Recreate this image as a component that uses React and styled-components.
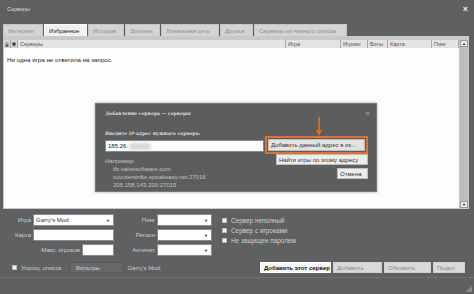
import React from "react";
import styled, { createGlobalStyle } from "styled-components";

const GlobalStyle = createGlobalStyle`
  html, body {
    margin: 0;
    padding: 0;
    background: #5d5f60;
  }
  * {
    box-sizing: border-box;
  }
`;

const Window = styled.div`
  position: relative;
  width: 474px;
  height: 294px;
  overflow: hidden;
  background: #5e6061;
  font-family: "Liberation Sans", Arial, sans-serif;
  font-size: 6px;
  color: #cfcfcf;
  display: flex;
  flex-direction: column;
`;

const TitleBar = styled.div`
  height: 24px;
  display: flex;
  align-items: flex-start;
  justify-content: space-between;
  padding: 6px 6px 0 7px;
  color: #d8d8d8;
  font-size: 5.5px;
`;

const Close = styled.span`
  font-size: 9px;
  font-weight: bold;
  color: #eee;
  line-height: 6px;
`;

const Tabs = styled.div`
  display: flex;
  gap: 1px;
  height: 12px;
  padding-left: 3px;
`;

const Tab = styled.div`
  width: ${(p) => p.w}px;
  height: 12px;
  padding: 0 0 0 4px;
  display: flex;
  align-items: center;
  background: ${(p) => (p.active ? "#f1f1f1" : "#d4d4d4")};
  color: ${(p) => (p.active ? "#1e1e1e" : "#8c8c8c")};
  border: 1px solid ${(p) => (p.active ? "#fafafa" : "#c4c4c4")};
  border-bottom: none;
  white-space: nowrap;
`;

const Panel = styled.div`
  height: 173px;
  margin: 0 5px 0 3px;
  background: #c9c9c9;
  padding: 4px 1px 1px 1px;
  display: flex;
`;

const ListArea = styled.div`
  flex: 1;
  display: flex;
  flex-direction: column;
`;

const Header = styled.div`
  height: 8px;
  display: flex;
  background: #e3e3e3;
  color: #555;
  font-size: 5.5px;
`;

const HeaderCell = styled.div`
  width: ${(p) => (p.w ? `${p.w}px` : "auto")};
  flex: ${(p) => (p.w ? "none" : 1)};
  display: flex;
  align-items: center;
  padding-left: 2px;
  border-right: 1px solid #a8a8a8;
  white-space: nowrap;
`;

const IconCell = styled.div`
  width: 7px;
  display: flex;
  align-items: center;
  justify-content: center;
  border-right: 1px solid #a8a8a8;
  background: #d6d6d6;
`;

const List = styled.div`
  flex: 1;
  background: #fdfdfd;
  color: #1c1c1c;
  padding: 8px 0 0 3px;
  font-size: 6.2px;
`;

const ScrollBar = styled.div`
  width: 8px;
  background: #bdbdbd;
  display: flex;
  flex-direction: column;
  justify-content: space-between;
  margin-left: 1px;
`;

const ScrollBtn = styled.div`
  height: 7px;
  background: #e8e8e8;
  border: 1px solid #9a9a9a;
  display: flex;
  align-items: center;
  justify-content: center;
  font-size: 4px;
  color: #222;
  line-height: 1;
`;

const Filters = styled.div`
  display: flex;
  padding-top: 5px;
`;

const FieldCol = styled.div`
  width: ${(p) => p.w}px;
  display: flex;
  flex-direction: column;
  gap: 3px;
`;

const FieldRow = styled.div`
  height: 12px;
  display: flex;
  align-items: center;
  justify-content: flex-end;
  gap: 2px;
  white-space: nowrap;
`;

const Field = styled.div`
  width: ${(p) => p.w}px;
  height: ${(p) => p.h || 12}px;
  background: #fdfdfd;
  border: 1px solid #8a8a8a;
  color: #333;
  display: flex;
  align-items: center;
  justify-content: space-between;
  padding: 0 3px 0 2px;
  font-size: 6px;
`;

const Arrow = styled.span`
  font-size: 4px;
  color: #222;
`;

const CheckCol = styled.div`
  display: flex;
  flex-direction: column;
  gap: 5px;
  margin-left: 10px;
  padding-top: 4px;
  font-size: 6.4px;
`;

const CheckRow = styled.div`
  display: flex;
  align-items: center;
  gap: 4px;
  height: 5px;
  white-space: nowrap;
`;

const Box = styled.span`
  width: 5px;
  height: 5px;
  background: #f4f4f4;
  border: 1px solid #bbb;
  flex: none;
`;

const BottomRow = styled.div`
  height: 11px;
  margin-top: 6px;
  display: flex;
  align-items: center;
  padding: 0 9px 0 12px;
  gap: 4px;
`;

const FilterBtn = styled.div`
  width: 53px;
  height: 11px;
  margin-left: 5px;
  background: #666869;
  border: 1px solid #585a5b;
  display: flex;
  align-items: center;
  padding-left: 4px;
  color: #d2d2d2;
`;

const Spacer = styled.div`
  flex: 1;
`;

const Buttons = styled.div`
  display: flex;
  gap: 2px;
`;

const Button = styled.div`
  width: ${(p) => p.w}px;
  height: ${(p) => p.h || 11}px;
  display: flex;
  align-items: center;
  padding-left: 3px;
  background: ${(p) => (p.primary ? "#f6f6f6" : "#d9d9d9")};
  color: ${(p) => (p.primary ? "#111" : "#888")};
  font-weight: ${(p) => (p.primary ? "bold" : "normal")};
  border: 1px solid ${(p) => (p.primary ? "#ffffff" : "#cfcfcf")};
  white-space: nowrap;
  flex: none;
`;

const Footer = styled.div`
  margin-top: 4px;
  height: 1px;
  background: #6f7172;
`;

const Grip = styled.div`
  position: absolute;
  right: 2px;
  bottom: 2px;
  width: 7px;
  height: 7px;
  background: repeating-linear-gradient(
    135deg,
    transparent 0 1px,
    #9a9c9d 1px 2px
  );
  clip-path: polygon(100% 0, 100% 100%, 0 100%);
`;

const Modal = styled.div`
  position: absolute;
  left: 95px;
  top: 103px;
  width: 282px;
  height: 89px;
  background: #5b5d5e;
  border: 1px solid #747677;
  box-shadow: 0 0 3px rgba(0, 0, 0, 0.35);
  padding: 7px 8px 0 9px;
  display: flex;
  flex-direction: column;
`;

const ModalTitle = styled.div`
  display: flex;
  justify-content: space-between;
  font-family: "DejaVu Serif", "Liberation Serif", serif;
  font-weight: bold;
  font-size: 4.6px;
  color: #dedede;
  height: 8px;
`;

const ModalClose = styled.span`
  font-family: "Liberation Sans", Arial, sans-serif;
  font-size: 8px;
  color: #999;
  line-height: 5px;
  margin-right: -2px;
`;

const Prompt = styled.div`
  margin-top: 12px;
  font-family: "DejaVu Serif", "Liberation Serif", serif;
  font-weight: bold;
  font-size: 4.6px;
  color: #dcdcdc;
  height: 9px;
`;

const ModalBody = styled.div`
  display: flex;
  gap: 1px;
`;

const LeftCol = styled.div`
  width: 163px;
  display: flex;
  flex-direction: column;
`;

const RightCol = styled.div`
  display: flex;
  flex-direction: column;
  align-items: flex-end;
  margin-top: -4px;
`;

const IpInput = styled.div`
  height: 12px;
  background: #fdfdfd;
  border: 1px solid #888;
  display: flex;
  align-items: center;
  padding-left: 2px;
  color: #222;
  font-size: 6px;
`;

const Blur = styled.span`
  display: inline-block;
  width: 22px;
  height: 7px;
  margin-left: 1px;
  background: #d8d8d8;
  border-radius: 4px;
  filter: blur(1.5px);
`;

const Examples = styled.div`
  margin-top: 5px;
  color: #c4c4c4;
  font-size: 6px;
  line-height: 8px;
`;

const Example = styled.div`
  padding-left: 8px;
`;

const Highlight = styled.div`
  border: 2px solid #e0732c;
  padding: 1px;
`;

const ModalButton = styled.div`
  width: ${(p) => p.w}px;
  height: ${(p) => p.h}px;
  margin-top: ${(p) => p.mt || 0}px;
  background: ${(p) => (p.dark ? "#e2e2e2" : "#ececec")};
  border: 1px solid #bdbdbd;
  color: #333;
  font-size: 6px;
  display: flex;
  align-items: center;
  padding-left: 2px;
  white-space: nowrap;
`;

const Pointer = styled.svg`
  position: absolute;
  left: 219px;
  top: 13px;
`;

const tabs = [
  { label: "Интернет", w: 40 },
  { label: "Избранное", w: 43, active: true },
  { label: "История", w: 36 },
  { label: "Зритель", w: 35 },
  { label: "Локальная сеть", w: 58 },
  { label: "Друзья", w: 33 },
  { label: "Серверы из черного списка", w: 93 },
];

const columns = [
  { label: "Серверы" },
  { label: "Игра", w: 55 },
  { label: "Игроки", w: 27 },
  { label: "Боты", w: 20 },
  { label: "Карта", w: 44 },
  { label: "Пинг", w: 27 },
];

const Combo = ({ w, value }) => (
  <Field w={w}>
    <span>{value}</span>
    <Arrow>▼</Arrow>
  </Field>
);

const Check = ({ children }) => (
  <CheckRow>
    <Box />
    <span>{children}</span>
  </CheckRow>
);

export default function App() {
  return (
    <>
      <GlobalStyle />
      <Window>
        <TitleBar>
          <span>Серверы</span>
          <Close>×</Close>
        </TitleBar>

        <Tabs>
          {tabs.map((t) => (
            <Tab key={t.label} w={t.w} active={t.active}>
              {t.label}
            </Tab>
          ))}
        </Tabs>

        <Panel>
          <ListArea>
            <Header>
              <IconCell>
                <svg width="4" height="5" viewBox="0 0 4 5">
                  <rect x="0.5" y="2" width="3" height="3" fill="#666" />
                  <path d="M1 2V1.2a1 1 0 0 1 2 0V2" stroke="#666" strokeWidth="0.6" fill="none" />
                </svg>
              </IconCell>
              <IconCell>
                <svg width="4" height="5" viewBox="0 0 4 5">
                  <path d="M0.3 0.5h3.4v2L2 4.7 0.3 2.5z" fill="#444" />
                </svg>
              </IconCell>
              {columns.map((c) => (
                <HeaderCell key={c.label} w={c.w}>
                  {c.label}
                </HeaderCell>
              ))}
            </Header>
            <List>Ни одна игра не ответила на запрос.</List>
          </ListArea>
          <ScrollBar>
            <ScrollBtn>▲</ScrollBtn>
            <ScrollBtn>▼</ScrollBtn>
          </ScrollBar>
        </Panel>

        <Filters>
          <FieldCol w={114}>
            <FieldRow>
              <span>Игра</span>
              <Combo w={81} value="Garry's Mod" />
            </FieldRow>
            <FieldRow>
              <span>Карта</span>
              <Field w={81} />
            </FieldRow>
            <FieldRow>
              <span>Макс. игроков</span>
              <Field w={32} />
            </FieldRow>
          </FieldCol>
          <FieldCol w={98}>
            <FieldRow>
              <span>Пинг</span>
              <Combo w={55} />
            </FieldRow>
            <FieldRow>
              <span>Регион</span>
              <Combo w={55} />
            </FieldRow>
            <FieldRow>
              <span>Античит</span>
              <Combo w={55} />
            </FieldRow>
          </FieldCol>
          <CheckCol>
            <Check>Сервер неполный</Check>
            <Check>Сервер с игроками</Check>
            <Check>Не защищен паролем</Check>
          </CheckCol>
        </Filters>

        <BottomRow>
          <Box />
          <span>Упрощ. список</span>
          <FilterBtn>Фильтры</FilterBtn>
          <span>Garry's Mod;</span>
          <Spacer />
          <Buttons>
            <Button primary w={71}>Добавить этот сервер</Button>
            <Button w={49}>Добавить</Button>
            <Button w={47}>Обновить</Button>
            <Button w={32}>Подкл.</Button>
          </Buttons>
        </BottomRow>
        <Footer />
        <Grip />

        <Modal>
          <ModalTitle>
            <span>Добавление сервера — серверы</span>
            <ModalClose>×</ModalClose>
          </ModalTitle>
          <Prompt>Введите IP-адрес нужного сервера:</Prompt>
          <ModalBody>
            <LeftCol>
              <IpInput>
                185.26.
                <Blur />
              </IpInput>
              <Examples>
                <div>Например:</div>
                <Example>tfc.valvesoftware.com</Example>
                <Example>counterstrike.speakeasy.net:27016</Example>
                <Example>205.158.143.200:27015</Example>
              </Examples>
            </LeftCol>
            <RightCol>
              <Highlight>
                <ModalButton w={97} h={12} dark>
                  Добавить данный адрес в из...
                </ModalButton>
              </Highlight>
              <ModalButton w={92} h={11}>
                Найти игры по этому адресу
              </ModalButton>
              <ModalButton w={31} h={11} mt={3}>
                Отмена
              </ModalButton>
            </RightCol>
          </ModalBody>
          <Pointer width="8" height="20" viewBox="0 0 8 20">
            <line x1="4" y1="0" x2="4" y2="16" stroke="#e0732c" strokeWidth="1.5" />
            <path d="M1 13L4 19 7 13z" fill="#e0732c" />
          </Pointer>
        </Modal>
      </Window>
    </>
  );
}
